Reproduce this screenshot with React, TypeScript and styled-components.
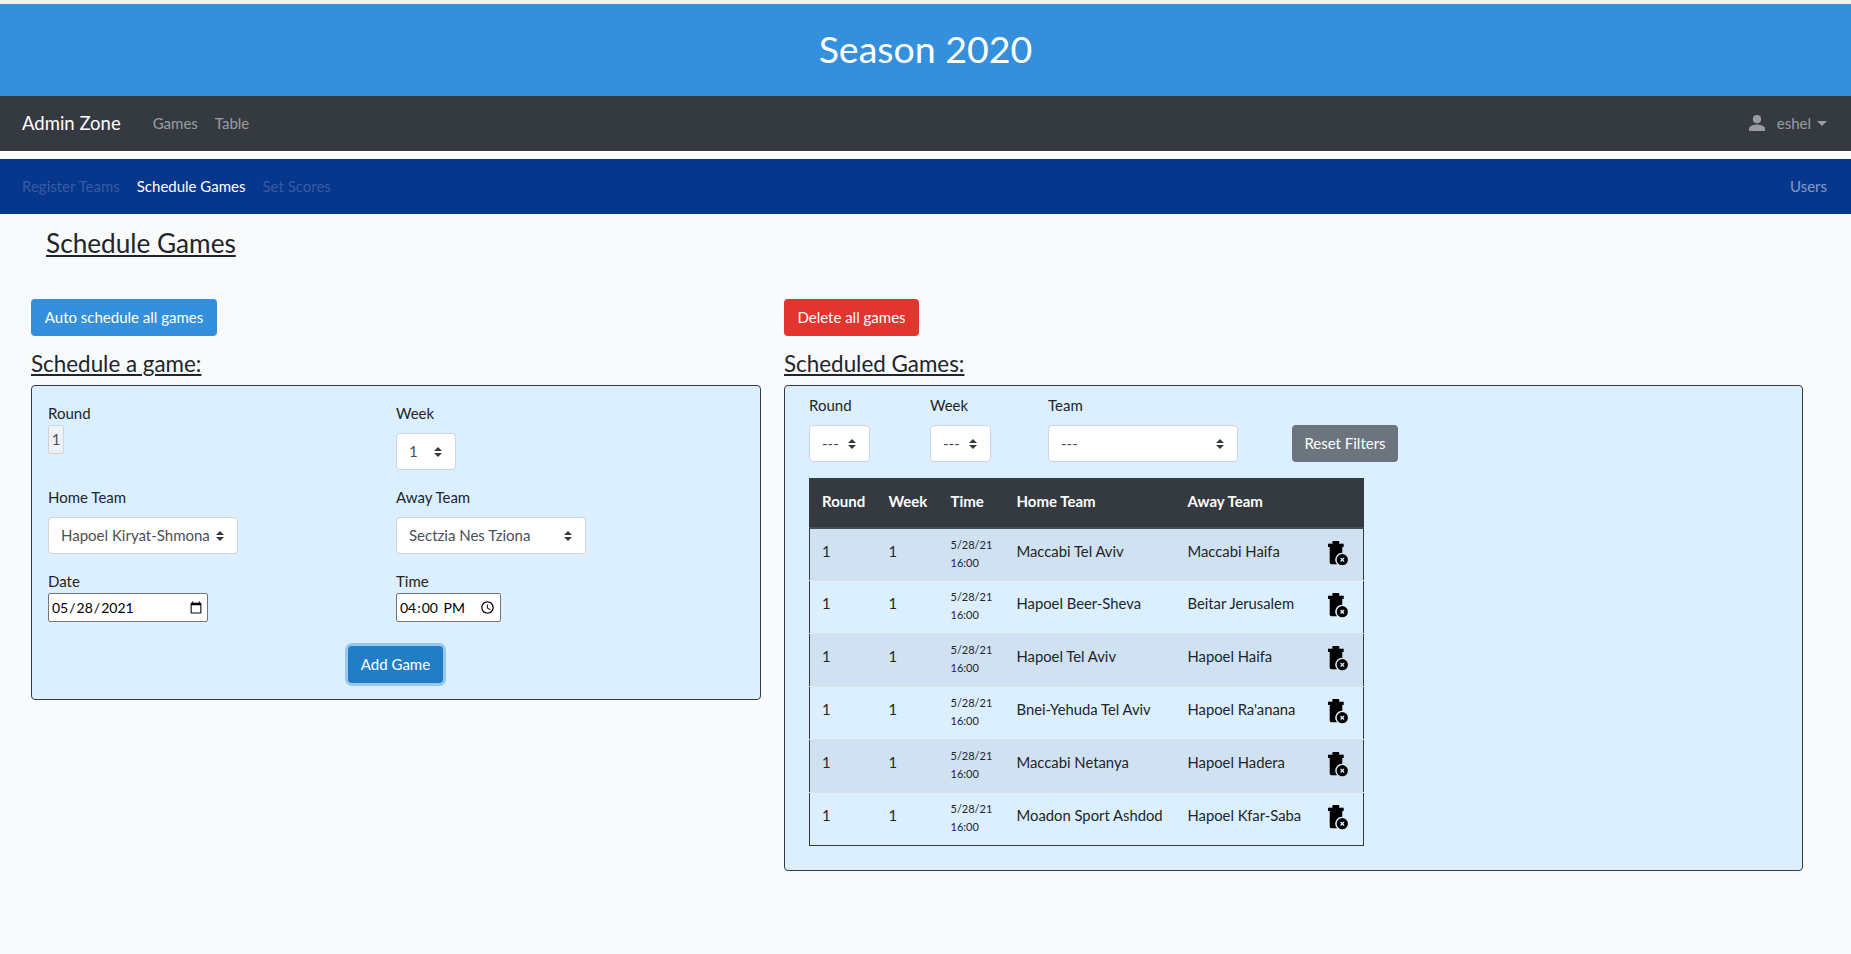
import React from "react";
import styled, { createGlobalStyle } from "styled-components";

const GlobalStyle = createGlobalStyle`
  html, body { margin: 0; padding: 0; }
  body {
    background: #f8fafc;
    color: #212529;
    font-family: "Lato", "Noto Sans", "Liberation Sans", sans-serif;
    font-size: 15px;
    line-height: 23px;
  }
  * { box-sizing: border-box; }
`;

const Page = styled.div`
  min-height: 100vh;
  border-top: 4px solid #f1efec;
`;
const Banner = styled.header`
  height: 92px;
  padding-bottom: 3px;
  background: #3490dc;
  display: flex;
  align-items: center;
  justify-content: center;
`;
const BannerTitle = styled.h1`
  margin: 0;
  color: #fff;
  font-size: 37.5px;
  line-height: 43px;
  font-weight: 400;
`;
const Bar = styled.nav<{ $bg: string }>`
  height: 55px;
  padding: 0 24px 1px 22px;
  background: ${(p) => p.$bg};
  display: flex;
  align-items: center;
`;
const Brand = styled.span`
  color: #fff;
  font-size: 18.5px;
  margin-right: 32px;
`;
const NavItem = styled.a<{ $color: string; $last?: boolean }>`
  color: ${(p) => p.$color};
  margin-right: ${(p) => (p.$last ? 0 : 17)}px;
`;
const RightGroup = styled.div`
  margin-left: auto;
  display: flex;
  align-items: center;
`;
const UserName = styled.span`
  color: rgba(255, 255, 255, 0.5);
  margin-left: 12px;
`;
const Caret = styled.span`
  width: 0;
  height: 0;
  margin-left: 6px;
  border-top: 5px solid rgba(255, 255, 255, 0.5);
  border-left: 5px solid transparent;
  border-right: 5px solid transparent;
`;
const Divider = styled.div`
  height: 8px;
  background: #fff;
`;
const PageTitle = styled.h3`
  margin: 14px 0 41px 46px;
  font-size: 26.2px;
  line-height: 30px;
  font-weight: 400;
  text-decoration: underline;
`;
const Columns = styled.div`
  display: grid;
  grid-template-columns: 730px 1019px;
  column-gap: 23px;
  padding-left: 31px;
  align-items: start;
`;
const Button = styled.button<{ $bg: string; $w: number }>`
  display: inline-block;
  width: ${(p) => p.$w}px;
  height: 37px;
  padding: 0;
  border: 0;
  border-radius: 4px;
  background: ${(p) => p.$bg};
  color: #fff;
  font: inherit;
`;
const FocusButton = styled(Button)`
  box-shadow: 0 0 0 3px rgba(82, 161, 225, 0.5);
`;
const SectionTitle = styled.h4`
  margin: 15px 0 8px;
  font-size: 22.4px;
  line-height: 26px;
  font-weight: 400;
  text-decoration: underline;
`;
const Panel = styled.section<{ $pad: string }>`
  background: #dcefff;
  border: 1px solid #343a40;
  border-radius: 4px;
  padding: ${(p) => p.$pad};
`;
const FormGrid = styled.div`
  display: grid;
  grid-template-columns: 348px 348px;
  row-gap: 16px;
`;
const Field = styled.div`
  display: flex;
  flex-direction: column;
  align-items: flex-start;
`;
const Label = styled.label<{ $gap?: number }>`
  display: block;
  margin-bottom: ${(p) => p.$gap ?? 0}px;
`;
const StaticValue = styled.span`
  width: 16px;
  height: 29px;
  line-height: 27px;
  text-align: center;
  color: #495057;
  background: #eef2f5;
  border: 1px solid #ced4da;
  border-radius: 2px;
`;
const arrows =
  "url(\"data:image/svg+xml,%3csvg xmlns='http://www.w3.org/2000/svg' width='4' height='5' viewBox='0 0 4 5'%3e%3cpath fill='%23343a40' d='M2 0L0 2h4zm0 5L0 3h4z'/%3e%3c/svg%3e\")";
const Select = styled.select<{ $w: number }>`
  appearance: none;
  width: ${(p) => p.$w}px;
  height: 37px;
  padding: 0 20px 0 12px;
  font: inherit;
  color: #495057;
  background: #fff ${arrows} no-repeat right 13px center / 8px 10px;
  border: 1px solid #ced4da;
  border-radius: 4px;
`;
const NativeInput = styled.input<{ $w: number }>`
  width: ${(p) => p.$w}px;
  height: 29px;
  padding: 1px 2px;
  font: inherit;
  font-size: 14px;
  color: #000;
  background: #fff;
  border: 1px solid #767676;
  border-radius: 2px;
`;
const SubmitRow = styled.div`
  display: flex;
  justify-content: center;
  margin-top: 24px;
  padding-right: 1px;
`;
const FilterRow = styled.div`
  display: flex;
  align-items: flex-end;
  margin-bottom: 16px;
`;
const FilterField = styled.div<{ $w: number }>`
  width: ${(p) => p.$w}px;
`;
const Table = styled.table`
  width: 554px;
  table-layout: fixed;
  border-collapse: collapse;
  border: 1px solid #343a40;
`;
const Col = styled.col<{ $w: number }>`
  width: ${(p) => p.$w}px;
`;
const Th = styled.th`
  height: 49px;
  padding: 0 12px 3px;
  background: #343a40;
  border-bottom: 2px solid #454d55;
  color: #fff;
  font-weight: 700;
  text-align: left;
  white-space: nowrap;
`;
const Row = styled.tr<{ $striped: boolean }>`
  background: ${(p) => (p.$striped ? "rgba(0,0,0,.05)" : "transparent")};
`;
const Td = styled.td`
  height: 53px;
  padding: 11px 12px 0;
  border-top: 1px solid #dee2e6;
  vertical-align: top;
  font-size: 14.8px;
  white-space: nowrap;
`;
const TimeCell = styled(Td)`
  padding-top: 7px;
`;
const TimeLine = styled.div`
  font-size: 11px;
  line-height: 18px;
`;
const IconCell = styled(Td)`
  padding: 12px 0 0 12px;
`;
const IconSvg = styled.svg`
  display: block;
`;

const TrashIcon = () => (
  <IconSvg width="20" height="24.5" viewBox="0 0 20 24.5" fill="#000">
    <rect x="4.3" y="0" width="7" height="3" rx="1" />
    <rect x="0" y="2.7" width="15.7" height="3.3" />
    <path d="M1.7 6H14.3V11.7A7 7 0 0 0 9.02 23.3H3.5Q1.7 23.3 1.7 21.5Z" />
    <path
      fillRule="evenodd"
      d="M14.3 13.1a5.6 5.6 0 1 0 0 11.2a5.6 5.6 0 1 0 0-11.2ZM12.1 17.5L13.1 16.5L14.3 17.7L15.5 16.5L16.5 17.5L15.3 18.7L16.5 19.9L15.5 20.9L14.3 19.7L13.1 20.9L12.1 19.9L13.3 18.7Z"
    />
  </IconSvg>
);
const UserIcon = () => (
  <IconSvg width="16" height="16" viewBox="0 0 16 16" fill="#9a9da0">
    <circle cx="8" cy="4.2" r="4.1" />
    <path d="M0 16v-2.2C0 11 5.3 9.6 8 9.6s8 1.4 8 4.2V16Z" />
  </IconSvg>
);

const games = [
  ["Maccabi Tel Aviv", "Maccabi Haifa"],
  ["Hapoel Beer-Sheva", "Beitar Jerusalem"],
  ["Hapoel Tel Aviv", "Hapoel Haifa"],
  ["Bnei-Yehuda Tel Aviv", "Hapoel Ra'anana"],
  ["Maccabi Netanya", "Hapoel Hadera"],
  ["Moadon Sport Ashdod", "Hapoel Kfar-Saba"],
];
const colWidths = [67, 62, 66, 171, 140, 48];
const heads = ["Round", "Week", "Time", "Home Team", "Away Team", ""];

export default function App() {
  return (
    <Page>
      <GlobalStyle />
      <Banner>
        <BannerTitle>Season 2020</BannerTitle>
      </Banner>
      <Bar $bg="#343a40">
        <Brand>Admin Zone</Brand>
        <NavItem $color="rgba(255,255,255,.5)">Games</NavItem>
        <NavItem $color="rgba(255,255,255,.5)">Table</NavItem>
        <RightGroup>
          <UserIcon />
          <UserName>eshel</UserName>
          <Caret />
        </RightGroup>
      </Bar>
      <Divider />
      <Bar $bg="#07368d">
        <NavItem $color="rgba(255,255,255,.2)">Register Teams</NavItem>
        <NavItem $color="#fff">Schedule Games</NavItem>
        <NavItem $color="rgba(255,255,255,.2)">Set Scores</NavItem>
        <RightGroup>
          <NavItem $last $color="rgba(255,255,255,.5)">
            Users
          </NavItem>
        </RightGroup>
      </Bar>
      <PageTitle>Schedule Games</PageTitle>
      <Columns>
        <div>
          <Button $bg="#3490dc" $w={186}>
            Auto schedule all games
          </Button>
          <SectionTitle>Schedule a game:</SectionTitle>
          <Panel $pad="16px 16px 16px">
            <FormGrid>
              <Field>
                <Label>Round</Label>
                <StaticValue>1</StaticValue>
              </Field>
              <Field>
                <Label $gap={8}>Week</Label>
                <Select $w={60} defaultValue="1">
                  <option>1</option>
                </Select>
              </Field>
              <Field>
                <Label $gap={8}>Home Team</Label>
                <Select $w={190}>
                  <option>Hapoel Kiryat-Shmona</option>
                </Select>
              </Field>
              <Field>
                <Label $gap={8}>Away Team</Label>
                <Select $w={190}>
                  <option>Sectzia Nes Tziona</option>
                </Select>
              </Field>
              <Field>
                <Label>Date</Label>
                <NativeInput $w={160} type="date" defaultValue="2021-05-28" />
              </Field>
              <Field>
                <Label>Time</Label>
                <NativeInput $w={105} type="time" defaultValue="16:00" />
              </Field>
            </FormGrid>
            <SubmitRow>
              <FocusButton $bg="#227dc7" $w={95}>
                Add Game
              </FocusButton>
            </SubmitRow>
          </Panel>
        </div>
        <div>
          <Button $bg="#e3342f" $w={135}>
            Delete all games
          </Button>
          <SectionTitle>Scheduled Games:</SectionTitle>
          <Panel $pad="8px 24px 24px">
            <FilterRow>
              <FilterField $w={121}>
                <Label $gap={8}>Round</Label>
                <Select $w={61}>
                  <option>---</option>
                </Select>
              </FilterField>
              <FilterField $w={118}>
                <Label $gap={8}>Week</Label>
                <Select $w={61}>
                  <option>---</option>
                </Select>
              </FilterField>
              <FilterField $w={244}>
                <Label $gap={8}>Team</Label>
                <Select $w={190}>
                  <option>---</option>
                </Select>
              </FilterField>
              <Button $bg="#6c757d" $w={106}>
                Reset Filters
              </Button>
            </FilterRow>
            <Table>
              <colgroup>
                {colWidths.map((w, i) => (
                  <Col key={i} $w={w} />
                ))}
              </colgroup>
              <thead>
                <tr>
                  {heads.map((h, i) => (
                    <Th key={i}>{h}</Th>
                  ))}
                </tr>
              </thead>
              <tbody>
                {games.map(([home, away], i) => (
                  <Row key={home} $striped={i % 2 === 0}>
                    <Td>1</Td>
                    <Td>1</Td>
                    <TimeCell>
                      <TimeLine>5/28/21</TimeLine>
                      <TimeLine>16:00</TimeLine>
                    </TimeCell>
                    <Td>{home}</Td>
                    <Td>{away}</Td>
                    <IconCell>
                      <TrashIcon />
                    </IconCell>
                  </Row>
                ))}
              </tbody>
            </Table>
          </Panel>
        </div>
      </Columns>
    </Page>
  );
}
